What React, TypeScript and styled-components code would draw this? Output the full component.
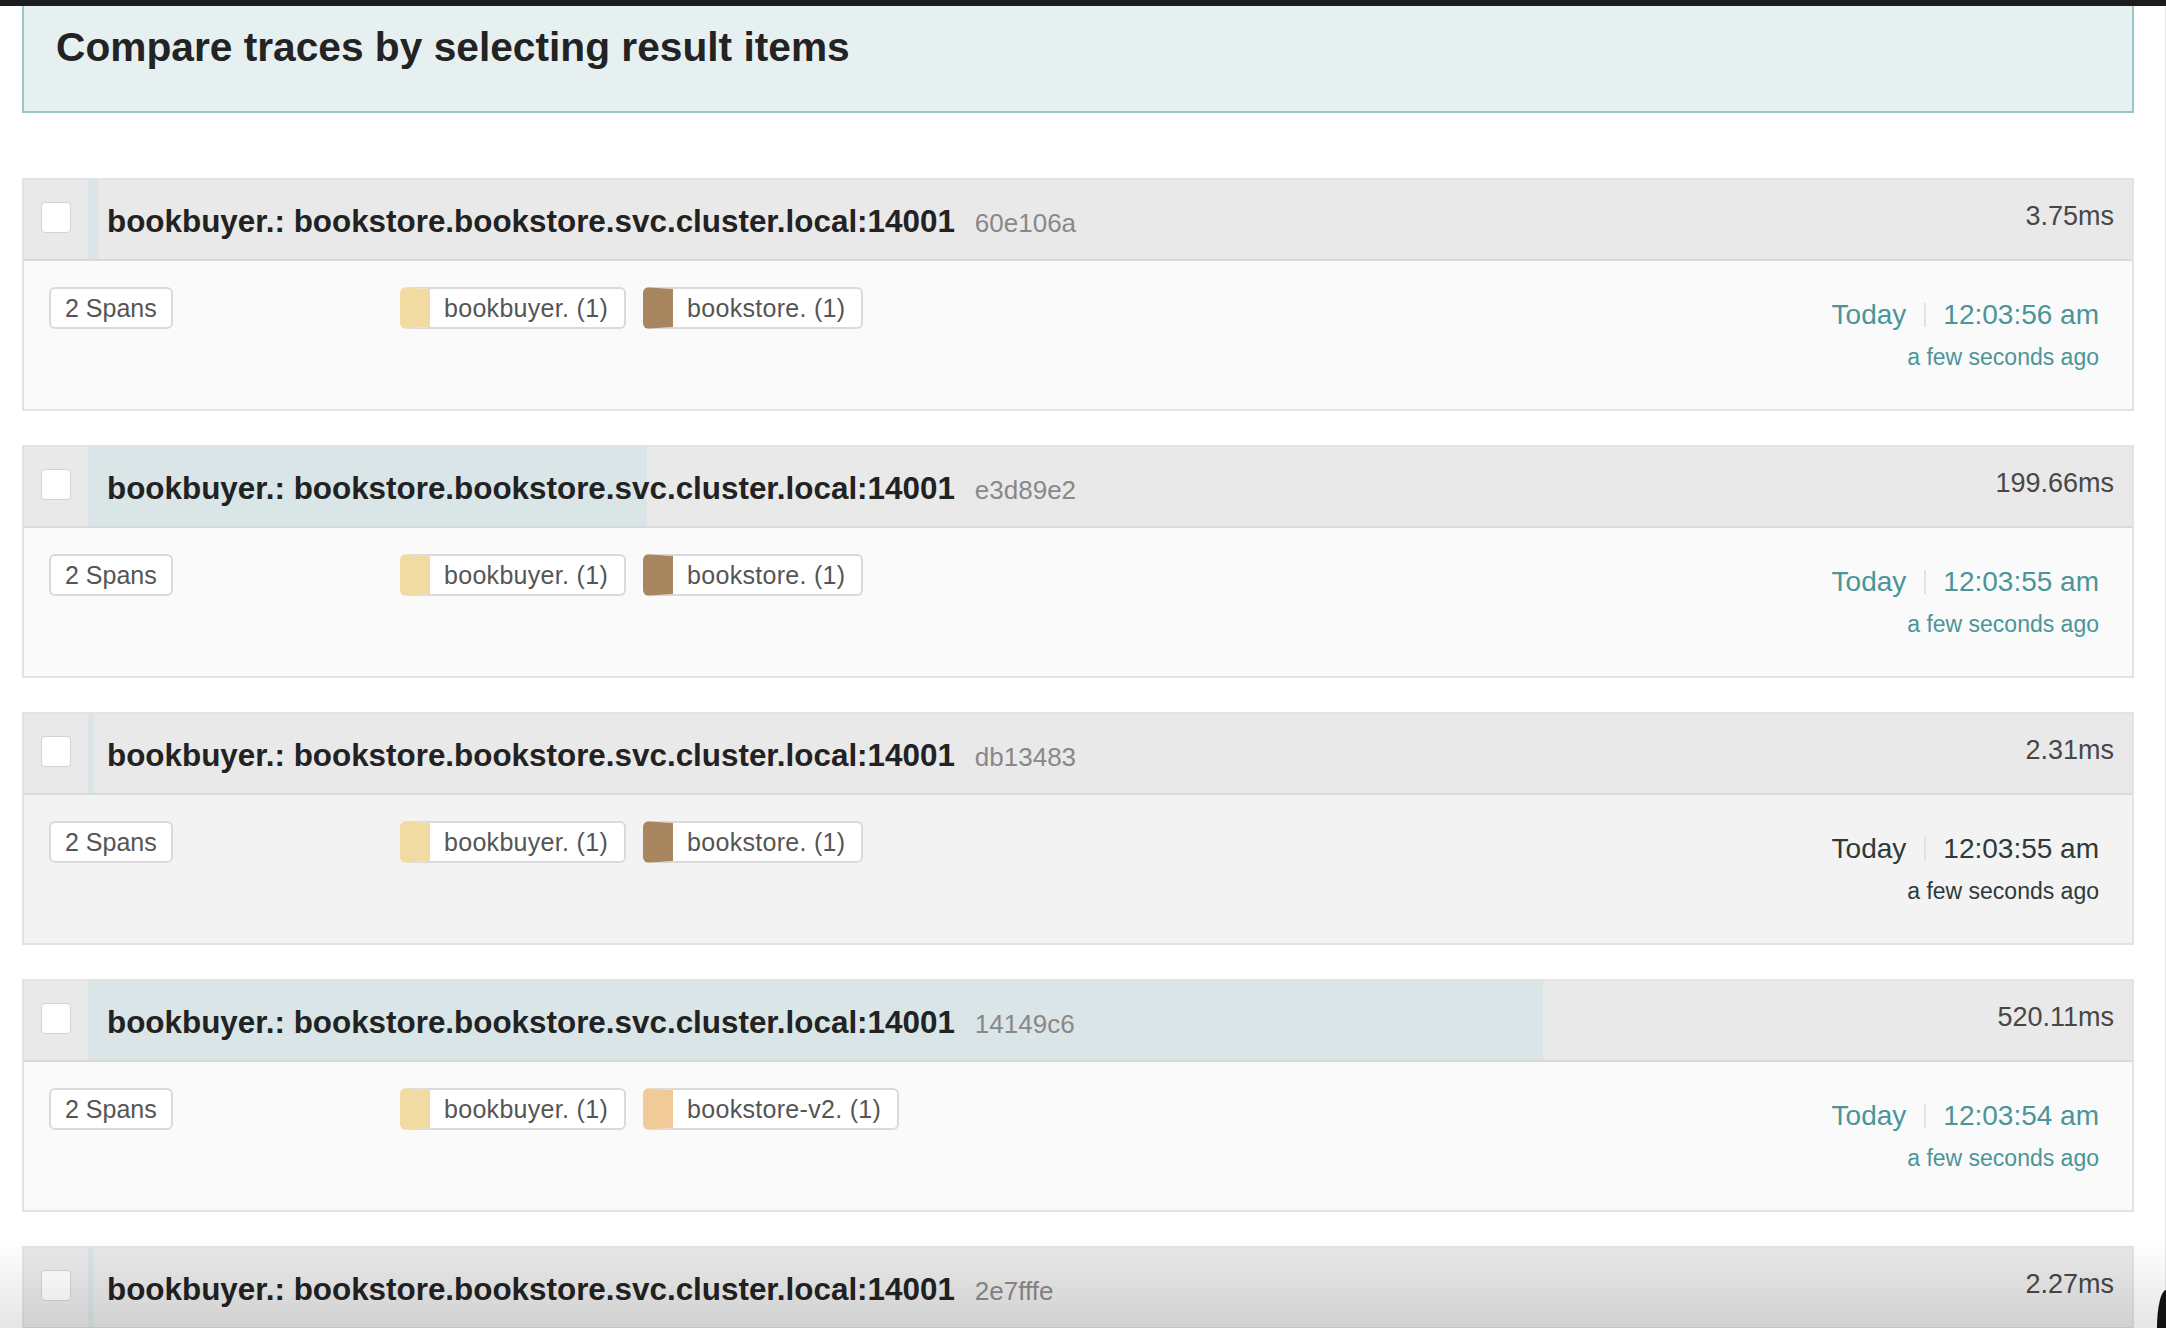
import React from "react";
import styled, { createGlobalStyle } from "styled-components";

const GlobalStyle = createGlobalStyle`
  html, body {
    margin: 0;
    padding: 0;
    background: #ffffff;
    overflow: hidden;
  }
  body {
    font-family: "Liberation Sans", Arial, Helvetica, sans-serif;
    color: #222;
  }
  * { box-sizing: border-box; }
`;

const Page = styled.div`
  position: relative;
  width: 2166px;
  height: 1328px;
  overflow: hidden;
  background: #fff;
  box-shadow: inset -1px 0 0 #e8e8e8;
`;

const TopBar = styled.div`
  height: 6px;
  background: #1c1c1c;
`;

const Content = styled.main`
  padding: 0 32px 0 22px;
`;

const CompareBanner = styled.section`
  height: 107px;
  background: #e7f0f1;
  border: 2px solid #9cc5c7;
  border-top: none;
  padding: 18px 0 0 32px;
`;

const BannerTitle = styled.h1`
  margin: 0;
  font-size: 40.7px;
  line-height: 47px;
  font-weight: 700;
  color: #232323;
  letter-spacing: 0;
`;

const ResultList = styled.div`
  display: flex;
  flex-direction: column;
  gap: 34px;
  margin-top: 65px;
`;

const Card = styled.article`
  border: 2px solid #e3e3e3;
  background: #fafafa;
`;

const CardHeader = styled.header`
  display: flex;
  height: 81px;
  background: #e9e9e9;
  border-bottom: 2px solid #d9d9d9;
`;

const CheckCell = styled.div`
  width: 64px;
  flex: none;
  padding: 22px 0 0 17px;
`;

const Checkbox = styled.span`
  display: block;
  width: 30px;
  height: 31px;
  background: #fff;
  border: 1px solid #d3d3d3;
  border-radius: 4px;
`;

const HeaderMain = styled.div`
  position: relative;
  flex: 1;
  display: flex;
  justify-content: space-between;
  align-items: flex-start;
`;

const DurationBar = styled.div`
  position: absolute;
  left: 0;
  top: 0;
  bottom: 0;
  background: #dae5e7;
`;

const TitleLine = styled.div`
  position: relative;
  display: flex;
  align-items: baseline;
  gap: 20px;
  padding: 24px 0 0 19px;
`;

const TraceName = styled.span`
  font-size: 31.4px;
  line-height: 36px;
  font-weight: 700;
  color: #222;
  letter-spacing: 0;
`;

const TraceId = styled.span`
  font-size: 26px;
  color: #888;
`;

const Duration = styled.span`
  position: relative;
  padding: 20px 18px 0 0;
  font-size: 27px;
  line-height: 32px;
  color: #474747;
`;

const CardBody = styled.div<{ $hovered?: boolean }>`
  display: grid;
  grid-template-columns: 351px 1fr auto;
  align-items: start;
  height: 148px;
  padding: 26px 33px 0 25px;
  background: ${(p) => (p.$hovered ? "#f3f3f3" : "#fafafa")};
`;

const Tags = styled.div`
  display: flex;
  gap: 17px;
`;

const Tag = styled.span<{ $swatch?: string }>`
  display: inline-flex;
  align-items: center;
  height: 42px;
  padding: 0 ${(p) => (p.$swatch ? "16px" : "14px")} 0 14px;
  background: #fff;
  border: 2px solid #dadada;
  border-left: ${(p) => (p.$swatch ? `30px solid ${p.$swatch}` : "2px solid #dadada")};
  border-radius: 6px;
  font-size: 25px;
  letter-spacing: ${(p) => (p.$swatch ? "0.3px" : "0")};
  color: #555;
  white-space: nowrap;
`;

const TimeBlock = styled.div<{ $hovered?: boolean }>`
  display: flex;
  flex-direction: column;
  align-items: flex-end;
  padding-top: 11px;
  color: ${(p) => (p.$hovered ? "#2d3a3b" : "#4a9599")};
`;

const TimeRow = styled.div`
  display: flex;
  align-items: center;
  height: 34px;
  font-size: 28px;
  line-height: 34px;
`;

const Divider = styled.span`
  width: 2px;
  height: 24px;
  margin: 0 17px 0 18px;
  background: #e2e2e2;
`;

const FromNow = styled.div`
  margin-top: 12px;
  font-size: 23px;
  line-height: 26px;
`;

const WindowShade = styled.div`
  position: absolute;
  left: 0;
  right: 0;
  bottom: 0;
  height: 90px;
  pointer-events: none;
  background: linear-gradient(to bottom, rgba(0, 0, 0, 0) 0%, rgba(0, 0, 0, 0.1) 100%);
`;

const WindowCorner = styled.div`
  position: absolute;
  right: 0;
  bottom: 0;
  width: 9px;
  height: 38px;
  background: #111;
  border-top-left-radius: 100% 100%;
`;

type Service = { name: string; color: string };
type Trace = {
  id: string;
  duration: number;
  time: string;
  services: Service[];
  hovered?: boolean;
};

const BUYER = { name: "bookbuyer. (1)", color: "#f1dba3" };
const STORE = { name: "bookstore. (1)", color: "#a8865f" };
const STORE_V2 = { name: "bookstore-v2. (1)", color: "#f0cb99" };

const traces: Trace[] = [
  { id: "60e106a", duration: 3.75, time: "12:03:56 am", services: [BUYER, STORE] },
  { id: "e3d89e2", duration: 199.66, time: "12:03:55 am", services: [BUYER, STORE] },
  { id: "db13483", duration: 2.31, time: "12:03:55 am", services: [BUYER, STORE], hovered: true },
  { id: "14149c6", duration: 520.11, time: "12:03:54 am", services: [BUYER, STORE_V2] },
  { id: "2e7fffe", duration: 2.27, time: "12:03:54 am", services: [BUYER, STORE] },
];

const maxDuration = Math.max(...traces.map((t) => t.duration));
const BAR_SCALE = 71.2;

function ResultItem({ trace }: { trace: Trace }) {
  return (
    <Card>
      <CardHeader>
        <CheckCell>
          <Checkbox />
        </CheckCell>
        <HeaderMain>
          <DurationBar style={{ width: `${(trace.duration / maxDuration) * BAR_SCALE}%` }} />
          <TitleLine>
            <TraceName>bookbuyer.: bookstore.bookstore.svc.cluster.local:14001</TraceName>
            <TraceId>{trace.id}</TraceId>
          </TitleLine>
          <Duration>{trace.duration}ms</Duration>
        </HeaderMain>
      </CardHeader>
      <CardBody $hovered={trace.hovered}>
        <div>
          <Tag>2 Spans</Tag>
        </div>
        <Tags>
          {trace.services.map((s) => (
            <Tag key={s.name} $swatch={s.color}>
              {s.name}
            </Tag>
          ))}
        </Tags>
        <TimeBlock $hovered={trace.hovered}>
          <TimeRow>
            <span>Today</span>
            <Divider />
            <span>{trace.time}</span>
          </TimeRow>
          <FromNow>a few seconds ago</FromNow>
        </TimeBlock>
      </CardBody>
    </Card>
  );
}

export default function App() {
  return (
    <Page>
      <GlobalStyle />
      <TopBar />
      <Content>
        <CompareBanner>
          <BannerTitle>Compare traces by selecting result items</BannerTitle>
        </CompareBanner>
        <ResultList>
          {traces.map((t) => (
            <ResultItem key={t.id} trace={t} />
          ))}
        </ResultList>
      </Content>
      <WindowShade />
      <WindowCorner />
    </Page>
  );
}
